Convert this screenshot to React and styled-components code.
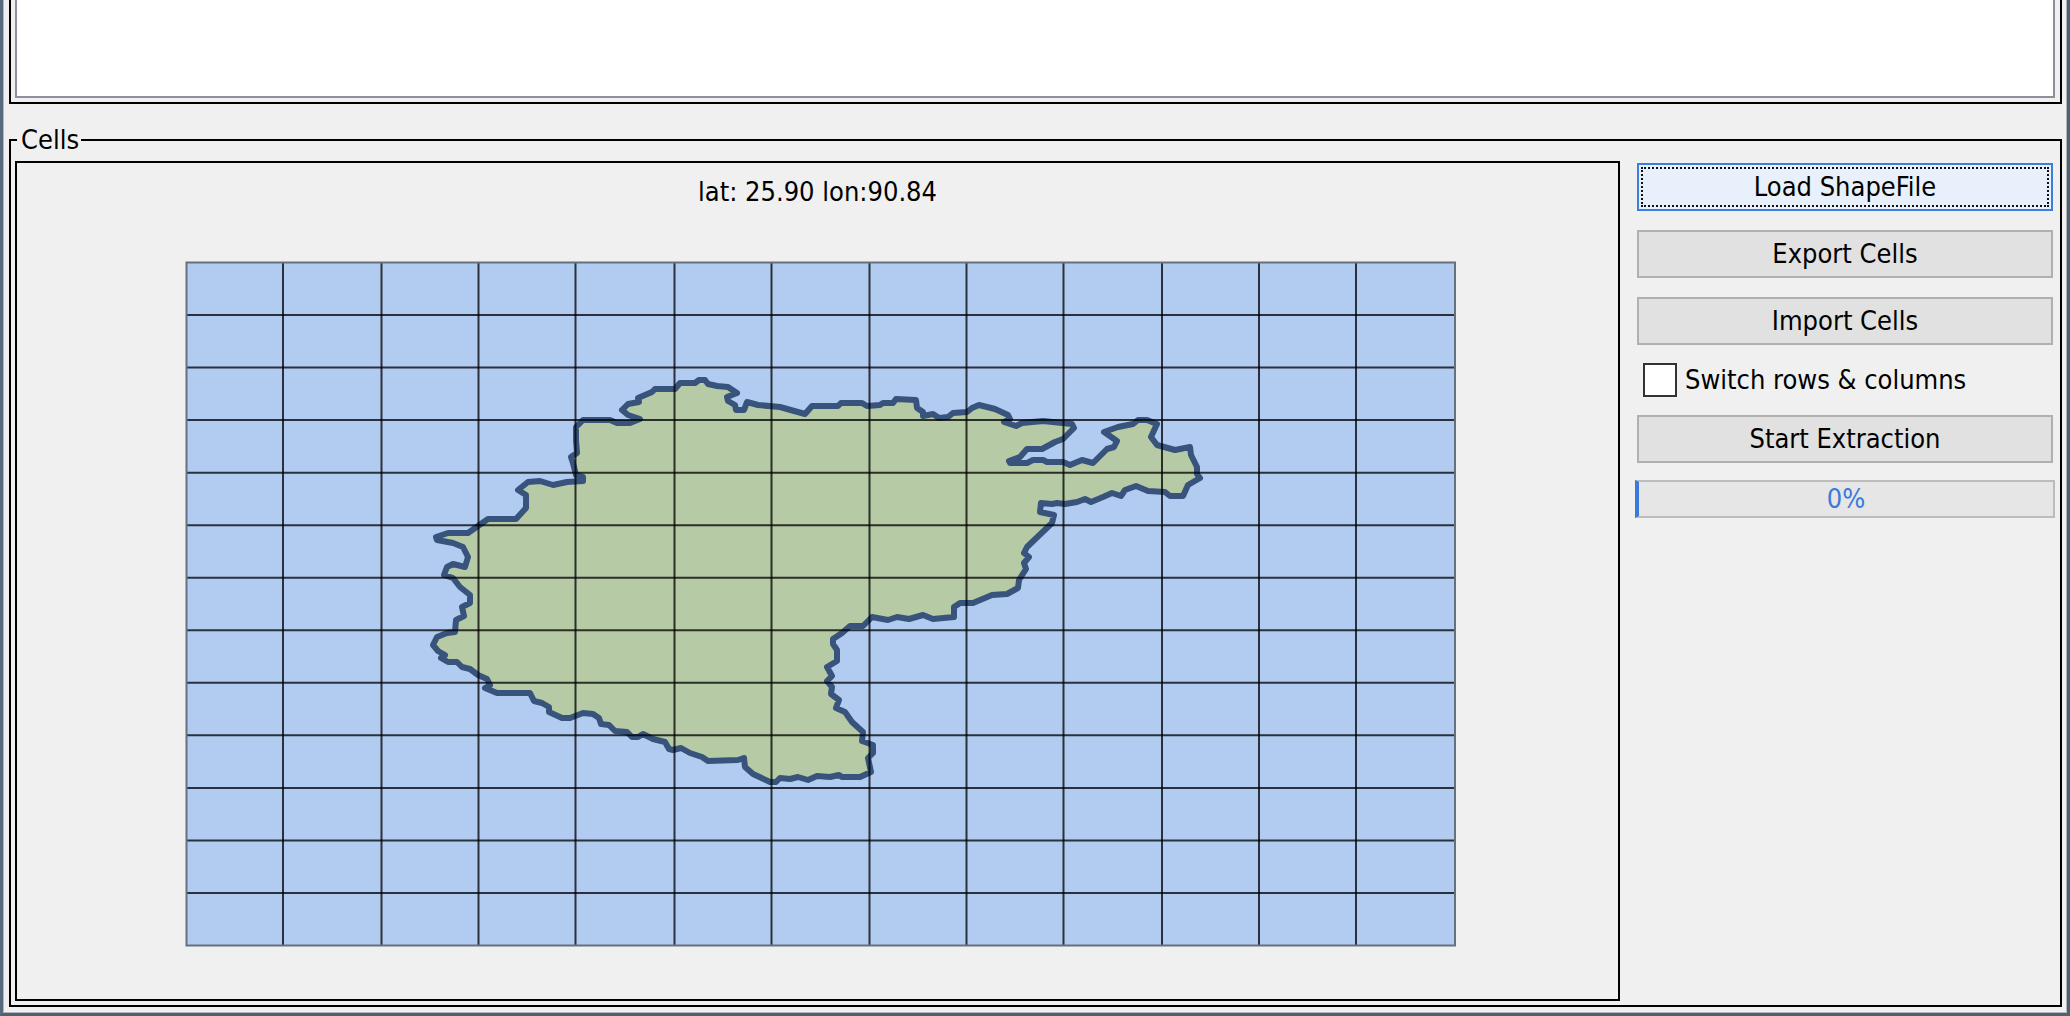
import React, { useState } from "react";
import styled, { createGlobalStyle } from "styled-components";

const GlobalStyle = createGlobalStyle`
  *, *::before, *::after { box-sizing: border-box; }
  html, body, #root { height: 100%; }
  body {
    margin: 0;
    background: #f0f0f0;
    color: #000;
    font: 27px/34px "DejaVu Sans Condensed", "Noto Sans", sans-serif;
  }
`;

const Window = styled.div`
  display: flex;
  flex-direction: column;
  min-height: 100%;
  padding: 0 5px 6px 8px;
  border: solid #52606e;
  border-width: 0 3px 3px;
  border-left-color: #5a6a7e;
  box-shadow: inset 1px 0 #b4b6be, inset -1px -1px #b4b6be;
`;

const ListPanel = styled.section`
  height: 104px;
  padding: 0 5px 4px 4px;
  border: 2px solid #000;
  border-top: 0;
  margin: 0 0 19px -2px;
`;

const ListView = styled.div`
  height: 100%;
  background: #fff;
  border: 2px solid #8b909a;
  border-top: 0;
`;

const CellsGroup = styled.fieldset`
  flex: 1;
  display: flex;
  min-width: 0;
  margin: 0 0 0 -2px;
  padding: 4px 7px 4px 4px;
  border: 2px solid #000;
`;

const GroupTitle = styled.legend`
  padding: 0 2px 0 4px;
  margin-left: 2px;
`;

const MapPanel = styled.section`
  flex: 1;
  min-width: 0;
  display: flex;
  flex-direction: column;
  gap: 53px;
  padding: 12px 0 52px;
  border: 2px solid #000;
`;

const Coordinates = styled.output`
  text-align: center;
`;

const MapFrame = styled.div`
  padding: 0 162px 0 169px;
`;

const MapDrawing = styled.svg`
  display: block;
  width: 100%;
  height: auto;
  overflow: visible;
`;

const Controls = styled.aside`
  flex: none;
  width: 433px;
  padding: 2px 0 0 17px;
  display: flex;
  flex-direction: column;
  gap: 19px;
`;

const Button = styled.button`
  height: 48px;
  padding: 0;
  font: inherit;
  color: #000;
  background: ${(p) => (p.$primary ? "#e8f0fb" : "#e1e1e1")};
  border: 2px solid ${(p) => (p.$primary ? "#3b7fdc" : "#b0b0b0")};
  outline: ${(p) => (p.$primary ? "2px dotted #111" : "none")};
  outline-offset: -6px;
`;

const CheckLabel = styled.label`
  display: flex;
  align-items: center;
  gap: 8px;
  height: 32px;
  padding-left: 6px;
`;

const CheckBox = styled.input`
  appearance: none;
  width: 34px;
  height: 34px;
  margin: 0;
  background: #fff;
  border: 2px solid #333;
  &:checked { background: #3b7fdc; box-shadow: inset 0 0 0 6px #fff; }
`;

const Progress = styled.div`
  height: 38px;
  margin: -2px -2px 0;
  border: 2px solid #bcbcbc;
  border-left: 4px solid #3b7adc;
  background: #e6e6e6;
  color: #3b7adc;
  text-align: center;
`;

const columns = [283, 381.5, 478.5, 575.5, 674.5, 771.5, 869.5, 966.5, 1063.5, 1162, 1259, 1356];
const rows = Array.from({ length: 12 }, (_, i) => 262.5 + ((i + 1) * 683) / 13);

const basin = `M530 693 497 693 485 688 490 685 487 679 478 675 470 669 462 667 457 662 448 662 441 658 445 655 438 651 433 645
437 637 447 633 455 632 456 620 464 616 462 607 470 603 470 595 460 587 453 578 444 575 447 567 453 564
465 567 468 557 463 547 453 543 437 540 436 537 448 533 468 533 488 519 516 519 526 508 526 495 518 490
528 482 540 481 553 485 567 482 583 481 583 477 576 475 573 463 571 457 577 453 576 440 576 427 583 420
610 420 617 423 630 423 640 419 628 415 622 410 628 404 639 402 638 398 652 392 655 389 675 389 680 383
695 383 699 380 705 380 708 384 717 386 728 387 737 393 727 397 728 401 735 405 736 410 744 410 747 402
758 405 780 407 805 414 812 406 838 406 841 403 862 403 867 406 880 405 883 403 893 403 896 399 916 400
917 408 923 412 923 416 933 414 939 418 948 417 953 413 967 412 972 408 979 405 995 409 1008 415 1010 419
1004 422 1016 426 1022 423 1043 421 1072 424 1074 428 1063 439 1055 442 1042 449 1027 449 1020 457
1009 461 1010 463 1027 463 1033 460 1043 460 1047 462 1063 462 1070 465 1082 460 1093 463 1107 449
1114 447 1117 441 1104 432 1118 427 1133 424 1138 420 1147 420 1157 424 1151 437 1157 445 1175 450
1190 447 1191 455 1197 467 1197 474 1200 478 1188 485 1183 496 1170 496 1165 492 1148 491 1136 486
1125 490 1121 496 1112 493 1103 497 1091 502 1085 499 1077 502 1065 504 1057 503 1052 504 1041 503
1040 512 1054 515 1052 523 1027 547 1024 553 1029 557 1024 563 1026 569 1019 580 1018 588 1007 594
992 595 973 603 960 603 954 607 954 617 933 619 923 615 909 619 897 617 888 620 872 617 863 626 850 626
842 633 833 639 833 644 837 650 837 661 827 667 832 676 827 681 832 687 831 694 839 700 836 708 845 712 852 722
863 732 862 741 873 745 873 753 868 758 871 772 860 777 842 777 839 775 830 777 817 776 808 780 798 777
790 779 780 778 776 782 770 782 753 774 745 767 744 758 738 760 708 761 702 757 690 753 681 748 673 750
669 749 665 742 653 739 643 734 638 737 632 737 627 732 615 731 609 725 601 724 599 718 593 714 583 713
570 718 562 718 549 712 549 707 542 703 534 701Z`;

export default function App() {
  const [swap, setSwap] = useState(false);
  return (
    <>
      <GlobalStyle />
      <Window>
        <ListPanel><ListView /></ListPanel>
        <CellsGroup>
          <GroupTitle>Cells</GroupTitle>
          <MapPanel>
            <Coordinates>lat: 25.90 lon:90.84</Coordinates>
            <MapFrame>
              <MapDrawing viewBox="186 262 1270 685" role="img">
                <rect x="186.5" y="262.5" width="1268.5" height="683" fill="#b1ccf0" />
                <path d={basin} fill="#b5caa5" stroke="#38547c" strokeWidth="6" strokeLinejoin="round" />
                <g stroke="#000" strokeOpacity="0.76" strokeWidth="2">
                  {columns.map((x) => <line key={x} x1={x} x2={x} y1="262" y2="946" />)}
                  {rows.map((y) => <line key={y} x1="186" x2="1455" y1={y} y2={y} />)}
                </g>
                <rect x="186.5" y="262.5" width="1268.5" height="683" fill="none" stroke="#66717f" strokeWidth="2" />
              </MapDrawing>
            </MapFrame>
          </MapPanel>
          <Controls>
            <Button $primary>Load ShapeFile</Button>
            <Button>Export Cells</Button>
            <Button>Import Cells</Button>
            <CheckLabel>
              <CheckBox type="checkbox" checked={swap} onChange={(e) => setSwap(e.target.checked)} />
              Switch rows &amp; columns
            </CheckLabel>
            <Button>Start Extraction</Button>
            <Progress role="progressbar" aria-valuenow={0} aria-valuemin={0} aria-valuemax={100}>0%</Progress>
          </Controls>
        </CellsGroup>
      </Window>
    </>
  );
}
